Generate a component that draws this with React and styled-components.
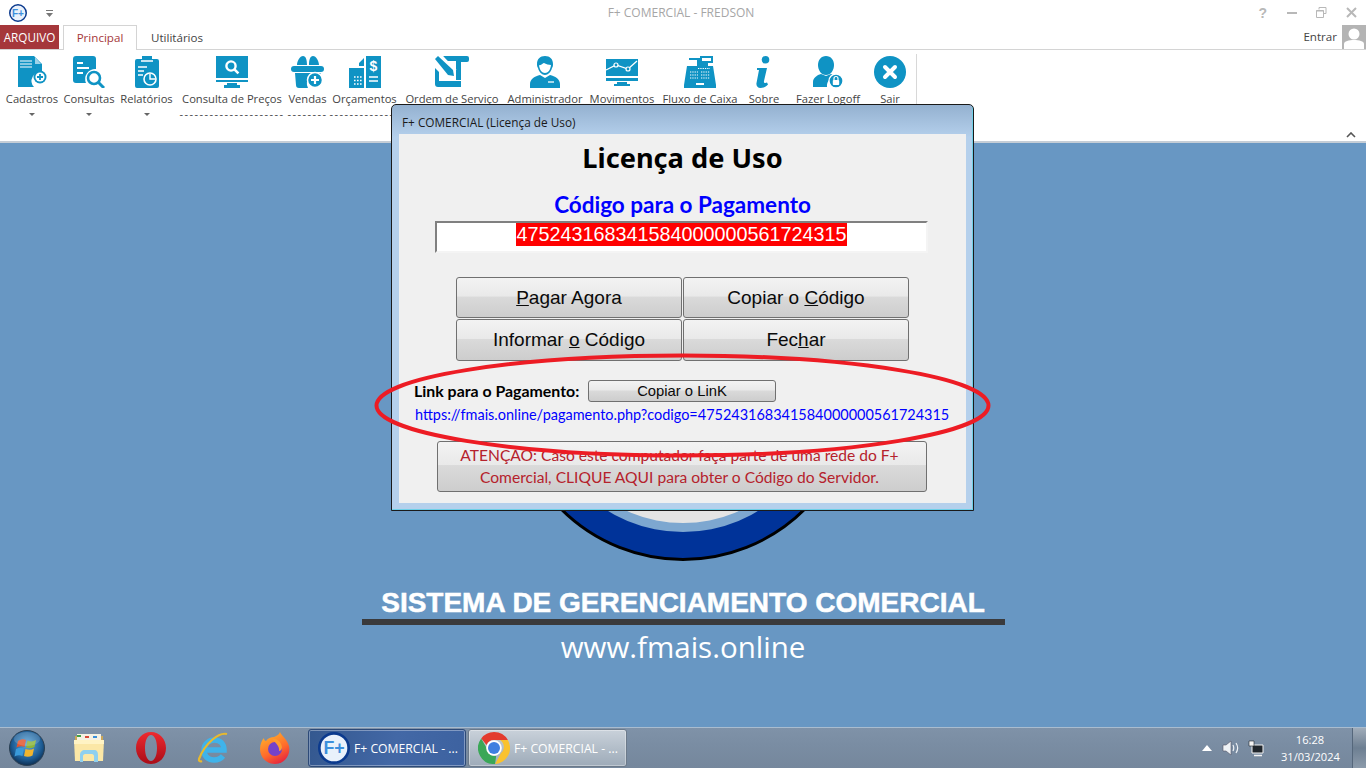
import styled, { createGlobalStyle } from "styled-components";

const BLUE = "#0f93c4";

const GlobalStyle = createGlobalStyle`
  html, body { margin: 0; padding: 0; background: #fff; }
  * { box-sizing: border-box; }
`;

const Screen = styled.div`
  position: relative;
  width: 1366px;
  height: 768px;
  overflow: hidden;
  display: flex;
  flex-direction: column;
  font-family: "Open Sans", "Liberation Sans", sans-serif;
  background: #fff;
`;

const TitleBar = styled.div`
  position: relative;
  height: 25px;
  display: flex;
  align-items: center;
  padding-left: 9px;
`;

const QuickCaret = styled.svg`
  margin-left: 19px;
`;

const TitleText = styled.div`
  position: absolute;
  left: 0;
  right: 4px;
  top: 4px;
  text-align: center;
  font-size: 12px;
  color: #a6a6a6;
`;

const WindowButtons = styled.div`
  margin-left: auto;
  display: flex;
  align-items: center;
`;

const WindowButton = styled.div`
  width: 29.5px;
  height: 24px;
  display: flex;
  align-items: center;
  justify-content: center;
  color: #b8b8b8;
  font: bold 14px "Liberation Sans", sans-serif;
`;

const TabRow = styled.div`
  height: 25px;
  display: flex;
  align-items: stretch;
  border-bottom: 1px solid #d4d4d4;
`;

const FileTab = styled.div`
  width: 59px;
  background: #a5373b;
  color: #fff;
  font-size: 11.7px;
  padding-bottom: 1px;
  display: flex;
  align-items: center;
  justify-content: center;
`;

const Tab = styled.div`
  width: ${(p) => p.$w}px;
  height: 25px;
  margin-left: ${(p) => p.$ml}px;
  padding-bottom: 2px;
  display: flex;
  align-items: center;
  justify-content: center;
  font-size: 11.6px;
  color: ${(p) => (p.$active ? "#a5373b" : "#444")};
  background: ${(p) => (p.$active ? "#fff" : "transparent")};
  border: 1px solid ${(p) => (p.$active ? "#d4d4d4" : "transparent")};
  border-bottom: none;
`;

const UserArea = styled.div`
  margin-left: auto;
  display: flex;
  align-items: flex-start;
  gap: 5px;
  font-size: 11.6px;
  line-height: 24px;
  color: #444;
`;

const Avatar = styled.svg`
  display: block;
`;

const Ribbon = styled.div`
  position: relative;
  height: 93px;
  display: flex;
  padding-left: 3px;
  background: #fff;
  border-bottom: 2px solid #c5cdd6;
`;

const RibbonItem = styled.div`
  width: ${(p) => p.$w}px;
  flex: none;
  padding-top: 6px;
  display: flex;
  flex-direction: column;
  align-items: center;
`;

const RibbonIcon = styled.svg`
  display: block;
  flex: none;
`;

const RibbonLabel = styled.div`
  margin-top: 3px;
  font-size: 11.2px;
  line-height: 15px;
  color: #444;
  white-space: nowrap;
`;

const Caret = styled.div`
  margin-top: 7px;
  width: 0;
  height: 0;
  border-left: 3px solid transparent;
  border-right: 3px solid transparent;
  border-top: 3px solid #666;
`;

const Dashes = styled.div`
  font-size: 11px;
  line-height: 15px;
  letter-spacing: 1.46px;
  color: #444;
  white-space: nowrap;
`;

const RibbonDivider = styled.div`
  width: 1px;
  height: 84px;
  margin: 4px 0 0 8px;
  background: #d8d8d8;
`;

const Collapse = styled.svg`
  position: absolute;
  right: 10px;
  bottom: 3px;
`;

const Desktop = styled.div`
  flex: 1;
  min-height: 0;
  display: flex;
  flex-direction: column;
  align-items: center;
  padding-top: 70px;
  background: #6897c3;
`;

const Logo = styled.svg`
  display: block;
  flex: none;
`;

const Slogan = styled.div`
  margin-top: 26px;
  font: bold 28px/32px "Liberation Sans", sans-serif;
  -webkit-text-stroke: 0.5px #fff;
  color: #fff;
  white-space: nowrap;
`;

const SloganRule = styled.div`
  width: 643px;
  height: 6px;
  background: #3a3a3c;
`;

const Website = styled.div`
  margin-top: 2px;
  font-size: 29.5px;
  line-height: 40px;
  color: #fff;
  white-space: nowrap;
`;

const Dialog = styled.div`
  position: absolute;
  left: 391px;
  top: 104px;
  width: 583px;
  height: 407px;
  display: flex;
  flex-direction: column;
  border: 1px solid #1a1a1a;
  border-radius: 5px 5px 0 0;
  padding: 0 7px 7px;
  background: linear-gradient(#94b1d0, #b5d0ec 8%, #b5d0ec);
  box-shadow: inset -1px -1px 0 #6fd0e8;
`;

const DialogTitle = styled.div`
  height: 29px;
  flex: none;
  padding: 9px 3px 0;
  font-size: 11.8px;
  line-height: 16px;
  color: #1a1a1a;
`;

const DialogBody = styled.div`
  flex: 1;
  display: flex;
  flex-direction: column;
  background: #f0f0f0;
`;

const Heading = styled.div`
  margin-top: 6px;
  text-align: center;
  font: bold 27.2px/36px "Noto Sans", sans-serif;
  color: #000;
`;

const SubHeading = styled.div`
  margin-top: 16px;
  text-align: center;
  font: bold 22.5px/26px Lato, sans-serif;
  color: #0000ff;
`;

const CodeBox = styled.div`
  width: 493px;
  height: 32px;
  margin: 3px 0 0 36px;
  flex: none;
  text-align: center;
  background: #fff;
  border-style: solid;
  border-width: 2px;
  border-color: #808080 #f4f4f4 #f4f4f4 #808080;
`;

const CodeText = styled.span`
  display: inline-block;
  background: #ff0000;
  color: #fff;
  font: 19.8px/23px "Liberation Sans", sans-serif;
`;

const ButtonGrid = styled.div`
  display: grid;
  grid-template-columns: 226px 226px;
  grid-template-rows: 41px 42px;
  gap: 1px;
  margin: 24px 0 0 57px;
`;

const GelButton = styled.div`
  display: flex;
  align-items: center;
  justify-content: center;
  width: ${(p) => (p.$w ? `${p.$w}px` : "auto")};
  height: ${(p) => (p.$h ? `${p.$h}px` : "auto")};
  border: 1px solid #707070;
  border-radius: 3px;
  background: linear-gradient(#f3f3f3, #e9e9e9 47%, #dadada 48%, #cdcdcd);
  color: #0a0a0a;
  font: ${(p) => p.$size || 19}px "Liberation Sans", sans-serif;
  text-align: center;
`;

const LinkRow = styled.div`
  display: flex;
  align-items: center;
  margin: 19px 0 0 15px;
`;

const LinkLabel = styled.div`
  width: 174px;
  font: bold 15.9px/20px Lato, sans-serif;
  color: #000;
`;

const LinkUrl = styled.div`
  margin: 3px 0 0 16px;
  font: 14.46px/20px Lato, sans-serif;
  color: #0000ff;
  white-space: nowrap;
`;

const WarningButton = styled(GelButton)`
  margin: 16px 0 0 38px;
  padding: 0 5px 1px 0;
  font: 15.6px/22px Lato, sans-serif;
  color: #b5222c;
`;

const Circle = styled.svg`
  position: absolute;
  left: 370px;
  top: 350px;
  pointer-events: none;
`;

const Taskbar = styled.div`
  height: 41px;
  flex: none;
  display: flex;
  align-items: center;
  background: linear-gradient(#7f92a8, #7a8da3 40%, #75879c);
  border-top: 1px solid #a9bccf;
`;

const StartSlot = styled.div`
  width: 54px;
  margin-right: 4px;
  display: flex;
  justify-content: center;
`;

const PinSlot = styled.div`
  width: 62px;
  display: flex;
  justify-content: center;
`;

const TaskGroup = styled.div`
  display: flex;
  gap: 2px;
  margin-left: 2px;
`;

const TaskButton = styled.div`
  width: ${(p) => p.$w}px;
  height: 38px;
  display: flex;
  align-items: center;
  gap: 4px;
  padding-left: 9px;
  border: 1px solid ${(p) => (p.$active ? "#2d4a78" : "#6c7a8a")};
  border-radius: 3px;
  box-shadow: inset 0 0 0 1px rgba(255, 255, 255, 0.35);
  background: ${(p) =>
    p.$active
      ? "linear-gradient(100deg, #34588f, #4368a6 55%, #3d62a0)"
      : "linear-gradient(#c9d1da, #b3bec9 50%, #9eabb9)"};
  color: #fff;
  font-size: 12.2px;
  white-space: nowrap;
`;

const Tray = styled.div`
  margin-left: auto;
  display: flex;
  align-items: center;
`;

const TrayIcon = styled.svg`
  display: block;
  margin-right: ${(p) => p.$mr}px;
`;

const Clock = styled.div`
  width: 58px;
  margin-right: 13px;
  text-align: center;
  font-size: 11.1px;
  line-height: 17px;
  color: #fff;
`;

const ShowDesktop = styled.div`
  width: 14px;
  height: 40px;
  border-left: 1px solid #55677b;
  background: linear-gradient(#a0acb9, #6d7f92 50%, #8c9bab);
`;

function FLogo({ size }) {
  return (
    <svg width={size} height={size} viewBox="0 0 36 36" style={{ display: "block", flex: "none" }}>
      <circle cx="18" cy="18" r="16.5" fill="#e9f1fb" stroke="#0b3a8e" strokeWidth="3" />
      <text x="18" y="25" textAnchor="middle" fontFamily="Liberation Sans" fontWeight="bold" fontSize="20" fill="#3d8fdc">
        F+
      </text>
    </svg>
  );
}

const icons = {
  cadastros: (
    <RibbonIcon width="30" height="32" viewBox="0 0 30 32">
      <path fill={BLUE} d="M1 0h16l8 8v8a9 9 0 0 0-8 15H1z" />
      <path fill="#9fd3e8" d="M18 1l6 7h-6z" />
      <path stroke="#fff" strokeWidth="1.2" d="M3 5h12M3 8h12M3 11h12" />
      <circle cx="23" cy="21" r="6.5" fill={BLUE} />
      <circle cx="23" cy="21" r="4.6" fill="#fff" />
      <path stroke={BLUE} strokeWidth="1.8" d="M23 18v6M20 21h6" />
    </RibbonIcon>
  ),
  consultas: (
    <RibbonIcon width="32" height="32" viewBox="0 0 32 32">
      <path fill={BLUE} d="M3 0h17a3 3 0 0 1 3 3v10a10 10 0 0 0-10 14H3a3 3 0 0 1-3-3V3a3 3 0 0 1 3-3z" />
      <path stroke="#fff" strokeWidth="2" d="M4 7h6M4 12h12M4 17h6" />
      <circle cx="21" cy="22" r="6" fill="#fff" stroke={BLUE} strokeWidth="2.6" />
      <path stroke={BLUE} strokeWidth="3" d="M25.5 26.5L31 32" />
    </RibbonIcon>
  ),
  relatorios: (
    <RibbonIcon width="24" height="32" viewBox="0 0 24 32">
      <path fill={BLUE} d="M2 3h5V0h10v3h5a2 2 0 0 1 2 2v25a2 2 0 0 1-2 2H2a2 2 0 0 1-2-2V5a2 2 0 0 1 2-2z" />
      <path stroke="#fff" strokeWidth="1.4" d="M6 5h12M3 11h9M3 15h6M3 19h5" />
      <circle cx="15" cy="23" r="6" fill={BLUE} stroke="#fff" strokeWidth="1.6" />
      <path stroke="#fff" strokeWidth="1.4" fill="none" d="M15 18v5h5" />
    </RibbonIcon>
  ),
  precos: (
    <RibbonIcon width="32" height="32" viewBox="0 0 32 32">
      <path fill={BLUE} d="M0 0h32v22H0zM0 24h32v2H0zM11 27h10v2h3v3H8v-3h3z" />
      <circle cx="15" cy="10" r="4.6" fill="none" stroke="#fff" strokeWidth="2.4" />
      <path stroke="#fff" strokeWidth="2.6" d="M18.4 13.4l4 4" />
    </RibbonIcon>
  ),
  vendas: (
    <RibbonIcon width="34" height="32" viewBox="0 0 34 32">
      <path fill={BLUE} d="M12 0c3 0 4 4 4 9H6c0-4 3-9 6-9zM22 0c-3 0-4 4-4 9h10c0-4-3-9-6-9z" />
      <rect x="0" y="10" width="33" height="6" rx="3" fill={BLUE} />
      <path fill={BLUE} d="M4 17h26l-1 1a10 10 0 0 0-12 14H8a3 3 0 0 1-3-3z" />
      <circle cx="24" cy="24" r="7.5" fill={BLUE} stroke="#fff" strokeWidth="1.5" />
      <path stroke="#fff" strokeWidth="2.2" d="M24 20v8M20 24h8" />
    </RibbonIcon>
  ),
  orcamentos: (
    <RibbonIcon width="32" height="32" viewBox="0 0 32 32">
      <path fill={BLUE} d="M17 0h15v32H17zM10 7l5-5v8h-5z" />
      <path fill={BLUE} d="M0 12h15v20H0z" />
      <path stroke="#fff" strokeWidth="1.4" d="M20 21h9M20 25h9" />
      <text x="24.5" y="15" textAnchor="middle" fontFamily="Liberation Sans" fontWeight="bold" fontSize="14" fill="#fff">
        $
      </text>
      <path stroke="#fff" strokeWidth="1.6" strokeDasharray="1.6 1.4" d="M5 21h8M5 24.500h8M5 28h8" />
    </RibbonIcon>
  ),
  ordem: (
    <RibbonIcon width="34" height="32" viewBox="0 0 34 32">
      <path fill={BLUE} d="M8 0h24a2 2 0 0 1 2 2v2a2 2 0 0 1-2 2h-6v18h-5V5H12z" />
      <path fill={BLUE} d="M0 12l4 4v9h22v6H3a3 3 0 0 1-3-3z" />
      <path fill={BLUE} d="M0 3l3-3 15 14 1 6-6-1z" />
      <path stroke="#fff" strokeWidth="1.2" d="M7 0L21 14" />
    </RibbonIcon>
  ),
  admin: (
    <RibbonIcon width="30" height="32" viewBox="0 0 30 32">
      <path fill={BLUE} d="M15 0c5 0 8 3 8 8 0 1 0 3-1 4-1 4-4 7-7 7s-6-3-7-7c-1-1-1-3-1-4 0-5 3-8 8-8z" />
      <path fill="#fff" d="M9 9c2 1 4-2 5-2 2 1 5 2 7 2-.5 5-3 8-6 8s-5.500-3-6-8z" />
      <path fill={BLUE} d="M10 19l5 3 5-3c5 1 10 4 10 9v4H0v-4c0-5 5-8 10-9z" />
      <path stroke="#fff" strokeWidth="1.3" d="M18 26h6" />
    </RibbonIcon>
  ),
  movimentos: (
    <RibbonIcon width="34" height="32" viewBox="0 0 34 32">
      <path fill={BLUE} d="M1 3h32v17H1zM1 22h32v3H1zM12 26h10v2h3v2H9v-2h3z" />
      <path fill="none" stroke="#fff" strokeWidth="1.3" d="M1 14l10-5 12 4 9-8" />
      <circle cx="11" cy="9" r="2" fill={BLUE} stroke="#fff" strokeWidth="1.2" />
      <circle cx="23" cy="13" r="2" fill={BLUE} stroke="#fff" strokeWidth="1.2" />
    </RibbonIcon>
  ),
  fluxo: (
    <RibbonIcon width="32" height="32" viewBox="0 0 32 32">
      <path fill={BLUE} d="M16 0h13v7h-5v3h5l3 19v3H0v-3l3-19h10V4h-8V2h11z" />
      <path fill="#fff" d="M18 2h9v3h-9zM12 27h8v2h-8z" />
      <path stroke="#fff" strokeWidth="1.2" strokeDasharray="1.3 1" d="M6 16h8M6 19h8M6 22h8M17 16h9M17 19h9M17 22h9M14 12.500h12" />
    </RibbonIcon>
  ),
  sobre: (
    <RibbonIcon width="16" height="32" viewBox="0 0 16 32">
      <circle cx="9.500" cy="3.800" r="3.800" fill={BLUE} />
      <path fill={BLUE} d="M1 12h10l-3 13c-.4 2 1 2.500 3 1.500l1 2c-2 2-4.500 3.500-7.500 3.500-3 0-4.500-2-4-5L3 14H1z" />
    </RibbonIcon>
  ),
  logoff: (
    <RibbonIcon width="30" height="32" viewBox="0 0 30 32">
      <path fill={BLUE} d="M13 0c5 0 8 4 8 9s-3 10-8 10-8-5-8-10 3-9 8-9z" />
      <path fill={BLUE} d="M8 18l5 2 5-2c2 .5 4 1.500 5.500 3A9 9 0 0 0 14 31H0v-5c0-4 4-7 8-8z" />
      <circle cx="23" cy="25" r="7" fill={BLUE} stroke="#fff" strokeWidth="1.3" />
      <rect x="19.800" y="24" width="6.400" height="5" rx="0.800" fill="#fff" />
      <path fill="none" stroke="#fff" strokeWidth="1.2" d="M21 24v-1.500a2 2 0 0 1 4 0V24" />
    </RibbonIcon>
  ),
  sair: (
    <RibbonIcon width="32" height="32" viewBox="0 0 32 32">
      <circle cx="16" cy="16" r="16" fill={BLUE} />
      <path stroke="#fff" strokeWidth="4" strokeLinecap="round" d="M11 11l10 10M21 11L11 21" />
    </RibbonIcon>
  ),
};

const ribbonItems = [
  { label: "Cadastros", w: 58, icon: "cadastros", caret: true },
  { label: "Consultas", w: 56, icon: "consultas", caret: true },
  { label: "Relatórios", w: 59, icon: "relatorios", caret: true },
  { label: "Consulta de Preços", w: 112, icon: "precos", dashes: 21 },
  { label: "Vendas", w: 39, icon: "vendas", dashes: 8 },
  { label: "Orçamentos", w: 75, icon: "orcamentos", dashes: 14 },
  { label: "Ordem de Serviço", w: 100, icon: "ordem" },
  { label: "Administrador", w: 86, icon: "admin" },
  { label: "Movimentos", w: 68, icon: "movimentos" },
  { label: "Fluxo de Caixa", w: 88, icon: "fluxo" },
  { label: "Sobre", w: 40, icon: "sobre" },
  { label: "Fazer Logoff", w: 88, icon: "logoff" },
  { label: "Sair", w: 36, icon: "sair" },
];

function StartOrb() {
  return (
    <svg width="36" height="36" viewBox="0 0 36 36" style={{ display: "block" }}>
      <defs>
        <radialGradient id="orb" cx="50%" cy="40%" r="60%">
          <stop offset="0" stopColor="#5aa7dd" />
          <stop offset="0.7" stopColor="#1d5c94" />
          <stop offset="1" stopColor="#0d2e52" />
        </radialGradient>
      </defs>
      <circle cx="18" cy="18" r="17.500" fill="url(#orb)" stroke="#2b3f52" />
      <path fill="#e2552d" d="M9 11c3-2 6-2 8-1l-1.500 7c-2-1-5-1-8 .5z" />
      <path fill="#8bb53c" d="M18.500 10.500c3 1.500 6 1 8.500-.5l-1.500 7c-3 1.500-6 1.500-8.500.5z" />
      <path fill="#3a9ad9" d="M7 19c3-1.500 5.500-1.500 8-.5L13.500 26c-2.500-1-5-1-8 .5z" />
      <path fill="#f1b52e" d="M16.500 19c3 1 6 1 8.500-.5l-1.500 7c-3 1.500-6 1.500-8.500.5z" />
      <ellipse cx="18" cy="9" rx="13" ry="7" fill="#fff" opacity="0.16" />
    </svg>
  );
}

function ExplorerIcon() {
  return (
    <svg width="32" height="30" viewBox="0 0 32 30" style={{ display: "block" }}>
      <path fill="#c9a75a" d="M2 3h28v25H2z" />
      <path fill="#f5f1e3" d="M4 1h24v10H4z" />
      <path fill="#43a047" d="M4 2h4v2H4z" />
      <path fill="#d84a3a" d="M12 3h4v2h-4z" />
      <path fill="#3a8fd9" d="M20 3h4v2h-4z" />
      <path fill="#fbe7a6" d="M1 7h30l-1 21H2z" />
      <path fill="#fff3c4" d="M1 7h30v4H1z" />
      <path fill="#8fd0ef" d="M7 29v-7c0-3 2-5 5-5h9c3 0 4 2 4 5v7h-4v-6c0-1-1-2-2-2h-7c-1 0-2 1-2 2v6z" />
    </svg>
  );
}

function OperaIcon() {
  return (
    <svg width="30" height="32" viewBox="0 0 30 32" style={{ display: "block" }}>
      <defs>
        <linearGradient id="opera" x1="0" y1="0" x2="0" y2="1">
          <stop offset="0" stopColor="#ee2a2f" />
          <stop offset="1" stopColor="#a90d18" />
        </linearGradient>
      </defs>
      <path fill="url(#opera)" fillRule="evenodd" d="M15 0c8.500 0 15 7 15 16s-6.500 16-15 16S0 25 0 16 6.500 0 15 0zm0 3c-3.500 0-6 5.500-6 13s2.500 13 6 13 6-5.500 6-13-2.500-13-6-13z" />
    </svg>
  );
}

function IeIcon() {
  return (
    <svg width="32" height="34" viewBox="0 0 32 34" style={{ display: "block" }}>
      <path fill="none" stroke="#3fb3ea" strokeWidth="5.500" d="M7 19h20c0-6-4-10-9.500-10C12 9 7 13 7 19c0 7 5 10 10 10 4 0 7-1.500 9-4" />
      <path fill="none" stroke="#e8b92e" strokeWidth="2.200" d="M30 3C22 1 8 12 2 28c-.5 2 1 3 3 2" />
    </svg>
  );
}

function FirefoxIcon() {
  return (
    <svg width="30" height="32" viewBox="0 0 30 32" style={{ display: "block" }}>
      <defs>
        <linearGradient id="fox" x1="0.2" y1="0" x2="0.7" y2="1">
          <stop offset="0" stopColor="#ffb52c" />
          <stop offset="0.6" stopColor="#ff6a2b" />
          <stop offset="1" stopColor="#e3223f" />
        </linearGradient>
      </defs>
      <path fill="url(#fox)" d="M20 0c1 3 7 7 9 14 2 9-5 18-14 18C6 32 0 25 0 17 0 12 2 8 4 6c0 2 1 3 2 3 2-3 5-4 8-4 2-1 5-2 6-5z" />
      <circle cx="15" cy="17" r="7" fill="#7542c8" />
      <path fill="#ff9a2e" d="M12 7c4-1 9 2 10 8 0 3-2 4-3 4 1-4-3-8-7-12z" />
    </svg>
  );
}

function ChromeIcon() {
  return (
    <svg width="32" height="32" viewBox="0 0 32 32" style={{ display: "block", flex: "none" }}>
      <path fill="#e33b2e" d="M16 0a16 16 0 0 1 13.900 8H16a8 8 0 0 0-7.400 5L3.200 6.500A16 16 0 0 1 16 0z" />
      <path fill="#f9c22e" d="M29.900 8A16 16 0 0 1 17 32l6-11a8 8 0 0 0-1-13z" />
      <path fill="#3aa757" d="M3.200 6.500l6 10.500a8 8 0 0 0 9 7L17 32A16 16 0 0 1 3.200 6.500z" />
      <circle cx="16" cy="16" r="7.800" fill="#fff" />
      <circle cx="16" cy="16" r="6" fill="#3f7fe0" />
    </svg>
  );
}

export default function App() {
  return (
    <Screen>
      <GlobalStyle />
      <TitleBar>
        <FLogo size={18} />
        <QuickCaret width="7" height="8" viewBox="0 0 7 8">
          <path fill="#777" d="M0 1h7v1H0zM0 4h7L3.500 8z" />
        </QuickCaret>
        <TitleText>F+ COMERCIAL - FREDSON</TitleText>
        <WindowButtons>
          <WindowButton>?</WindowButton>
          <WindowButton>
            <svg width="11" height="3" viewBox="0 0 11 3"><rect width="10" height="2" y="1" fill="#b8b8b8" /></svg>
          </WindowButton>
          <WindowButton>
            <svg width="11" height="11" viewBox="0 0 11 11">
              <path fill="none" stroke="#b8b8b8" d="M3 2.500V.5h7v6H8M.5 3.500h7v7h-7z" />
              <path stroke="#b8b8b8" d="M0 4h8" />
            </svg>
          </WindowButton>
          <WindowButton>
            <svg width="11" height="11" viewBox="0 0 11 11">
              <path stroke="#b8b8b8" strokeWidth="2" d="M1 1l9 9M10 1l-9 9" />
            </svg>
          </WindowButton>
        </WindowButtons>
      </TitleBar>

      <TabRow>
        <FileTab>ARQUIVO</FileTab>
        <Tab $w={74} $ml={4} $active>Principal</Tab>
        <Tab $w={80} $ml={0}>Utilitários</Tab>
        <UserArea>
          Entrar
          <Avatar width="24" height="24" viewBox="0 0 24 24">
            <rect width="24" height="24" fill="#b4b4b4" />
            <circle cx="12" cy="9" r="5.500" fill="#fff" />
            <path fill="#fff" d="M2 24v-5c0-3 5-4 10-4s10 1 10 4v5z" />
          </Avatar>
        </UserArea>
      </TabRow>

      <Ribbon>
        {ribbonItems.map((item) => (
          <RibbonItem key={item.label} $w={item.w}>
            {icons[item.icon]}
            <RibbonLabel>{item.label}</RibbonLabel>
            {item.caret && <Caret />}
            {item.dashes && <Dashes>{"-".repeat(item.dashes)}</Dashes>}
          </RibbonItem>
        ))}
        <RibbonDivider />
        <Collapse width="10" height="6" viewBox="0 0 10 6">
          <path fill="none" stroke="#555" strokeWidth="1.600" d="M1 5l4-4 4 4" />
        </Collapse>
      </Ribbon>

      <Desktop>
        <Logo width="348" height="348" viewBox="0 0 348 348">
          <circle cx="174" cy="174" r="172.500" fill="#003399" stroke="#000" strokeWidth="3" />
          <circle cx="174" cy="174" r="145" fill="#7da7d0" />
          <circle cx="174" cy="174" r="136" fill="#e4e4e4" />
        </Logo>
        <Slogan>SISTEMA DE GERENCIAMENTO COMERCIAL</Slogan>
        <SloganRule />
        <Website>www.fmais.online</Website>
      </Desktop>

      <Taskbar>
        <StartSlot><StartOrb /></StartSlot>
        <PinSlot><ExplorerIcon /></PinSlot>
        <PinSlot><OperaIcon /></PinSlot>
        <PinSlot><IeIcon /></PinSlot>
        <PinSlot><FirefoxIcon /></PinSlot>
        <TaskGroup>
          <TaskButton $w={158} $active>
            <FLogo size={32} />
            F+ COMERCIAL - ...
          </TaskButton>
          <TaskButton $w={159}>
            <ChromeIcon />
            F+ COMERCIAL - ...
          </TaskButton>
        </TaskGroup>
        <Tray>
          <TrayIcon $mr={10} width="10" height="6" viewBox="0 0 10 6">
            <path fill="#fff" d="M5 0l5 6H0z" />
          </TrayIcon>
          <TrayIcon $mr={9} width="17" height="16" viewBox="0 0 17 16">
            <path fill="#eef2f6" stroke="#556" strokeWidth="0.600" d="M1 5h3l5-4v14l-5-4H1z" />
            <path fill="none" stroke="#eef2f6" strokeWidth="1.200" d="M11 5c1 2 1 4 0 6M14 3c2 3 2 7 0 10" />
          </TrayIcon>
          <TrayIcon $mr={17} width="16" height="17" viewBox="0 0 16 17">
            <path fill="#20262c" stroke="#f4f4f4" d="M4 5h11v8H4z" />
            <path stroke="#f4f4f4" strokeWidth="1.500" d="M6 15.500h8" />
            <path fill="#f4f4f4" stroke="#20262c" strokeWidth="0.600" d="M1 1h5v5H1z" />
          </TrayIcon>
          <Clock>
            16:28
            <br />
            31/03/2024
          </Clock>
          <ShowDesktop />
        </Tray>
      </Taskbar>

      <Dialog>
        <DialogTitle>F+ COMERCIAL (Licença de Uso)</DialogTitle>
        <DialogBody>
          <Heading>Licença de Uso</Heading>
          <SubHeading>Código para o Pagamento</SubHeading>
          <CodeBox>
            <CodeText>475243168341584000000561724315</CodeText>
          </CodeBox>
          <ButtonGrid>
            <GelButton><span><u>P</u>agar Agora</span></GelButton>
            <GelButton><span>Copiar o <u>C</u>ódigo</span></GelButton>
            <GelButton><span>Informar <u>o</u> Código</span></GelButton>
            <GelButton><span>Fec<u>h</u>ar</span></GelButton>
          </ButtonGrid>
          <LinkRow>
            <LinkLabel>Link para o Pagamento:</LinkLabel>
            <GelButton $w={188} $h={22} $size={14.8}>Copiar o LinK</GelButton>
          </LinkRow>
          <LinkUrl>https://fmais.online/pagamento.php?codigo=475243168341584000000561724315</LinkUrl>
          <WarningButton $w={490} $h={51}>
            <span>
              ATENÇÃO: Caso este computador faça parte de uma rede do F+
              <br />
              Comercial, CLIQUE AQUI para obter o Código do Servidor.
            </span>
          </WarningButton>
        </DialogBody>
      </Dialog>

      <Circle width="626" height="112" viewBox="0 0 626 112">
        <ellipse cx="312.500" cy="55.500" rx="306" ry="50" fill="none" stroke="#ed1c24" strokeWidth="4" />
      </Circle>
    </Screen>
  );
}
